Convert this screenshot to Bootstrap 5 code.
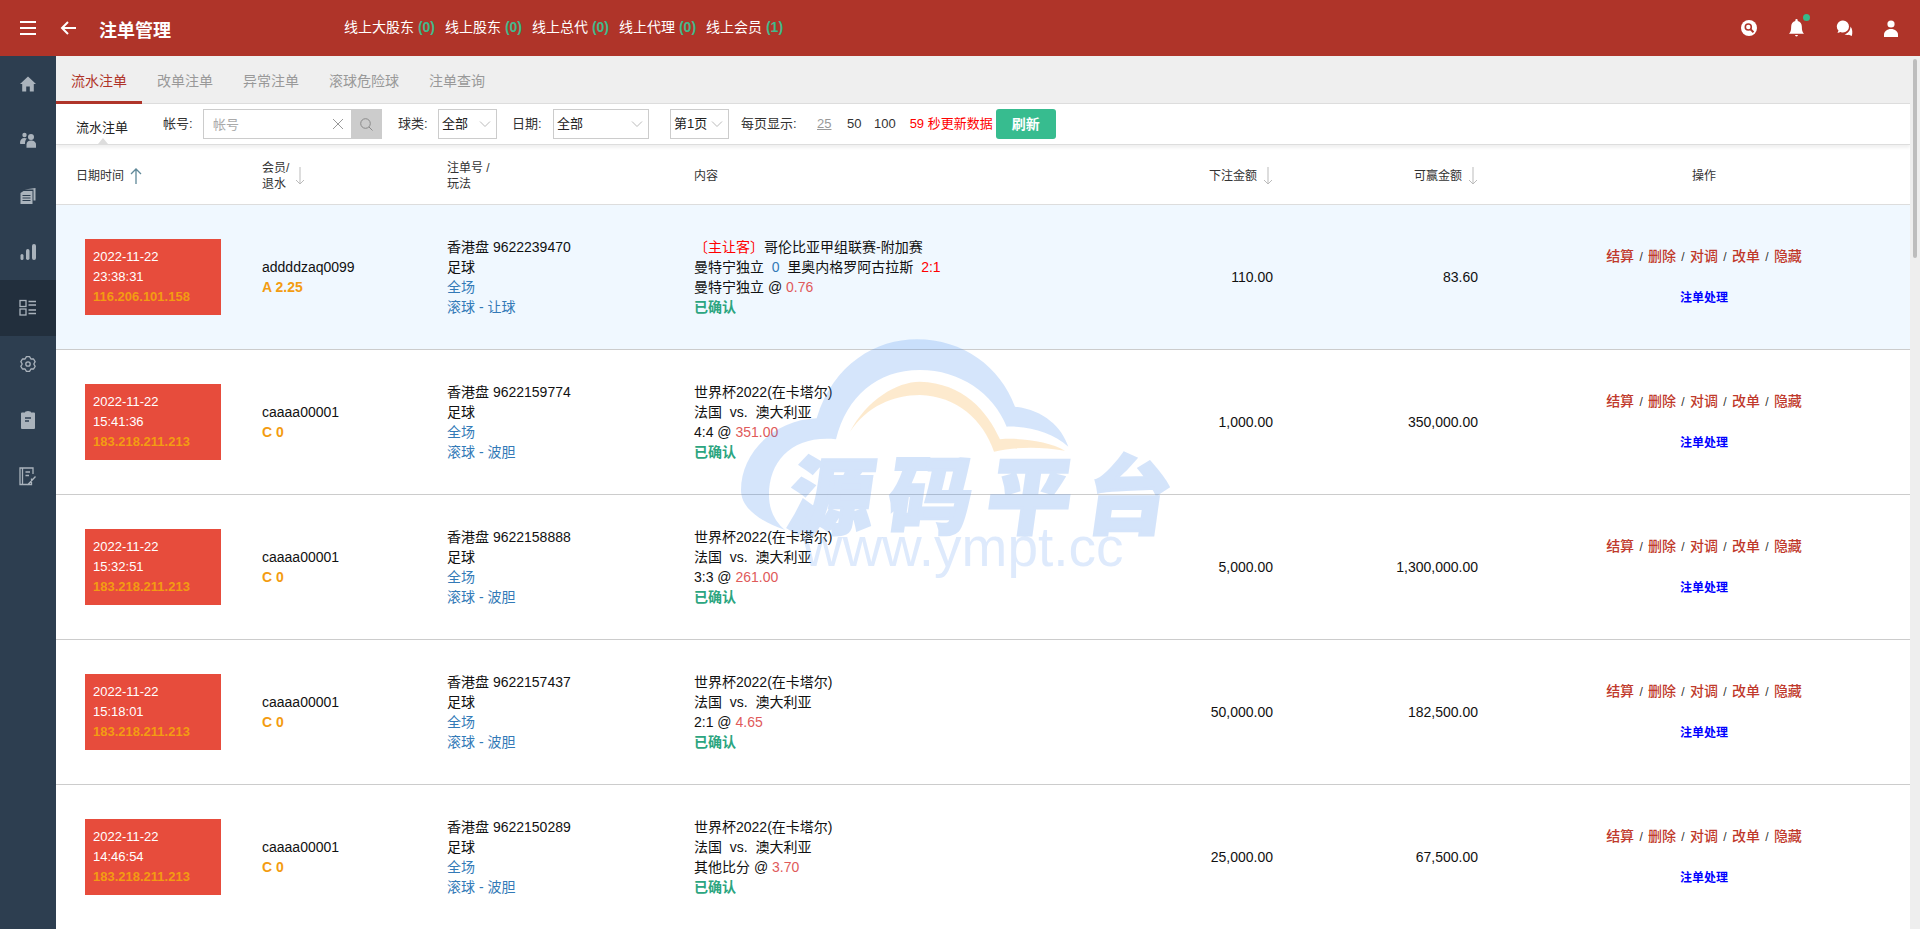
<!DOCTYPE html>
<html lang="zh">
<head>
<meta charset="utf-8">
<title>注单管理</title>
<link href="https://cdn.jsdelivr.net/npm/bootstrap@5.3.0/dist/css/bootstrap.min.css" rel="stylesheet">
<style>
html,body{height:100%;overflow:hidden}
body{font-family:"Liberation Sans","Noto Sans CJK SC",sans-serif;font-size:13px;color:#222;background:#fff}
.topbar{height:56px;background:#af3429;color:#fff;padding-left:20px;padding-right:21px}
.topbar svg{display:block}
.pagetitle{font-size:18px;font-weight:700;margin-left:23px;margin-top:6px;width:245px}
.onlinelinks{font-size:14px;gap:10px;margin-top:-1px}
.onlinelinks b{color:#43b98b;font-weight:700}
.topicons{gap:30px}
.belldot{position:absolute;width:7px;height:7px;border-radius:50%;background:#36b98a;top:-5px;right:-4px}
.shell{height:873px}
.sidemenu{width:56px;background:#2d3e50;flex:none}
.sideitem{height:56px;color:#aab3bc}
.sideitem.on{background:#222f3d}
.mainpane{overflow:hidden;position:relative;min-width:0}
.scrolltrack{width:10px;background:#eee;flex:none}
.scrollthumb{width:4px;height:199px;margin:3px 0 0 3px;border-radius:2px;background:#bdbdbd}
.tabstrip{height:48px;background:#efefef;border-bottom:1px solid #ddd}
.tabitem{font-size:14px;padding:5px 15px 0;color:#999;text-decoration:none;height:48px;display:flex;align-items:center;border-bottom:2px solid transparent;margin-bottom:-1px}
.tabitem.on{color:#af3429;border-bottom:3px solid #af3429}
.filterbar{height:41px;border-bottom:1px solid #ddd;box-shadow:0 3px 3px rgba(0,0,0,.06);padding-top:5px;position:relative;background:#fff;z-index:1}
.filtertitle{position:absolute;left:20px;top:0;height:40px;padding-top:14px;width:54px;white-space:nowrap}
.filtertitle::after{content:"";position:absolute;left:22px;bottom:0;border:5px solid transparent;border-top:0;border-bottom:6px solid #ddd}
.ftlabel{white-space:nowrap;color:#333;width:30px}
.ftwide{width:56px}
.searchbox{border:1px solid #ccc;height:30px;width:179px;margin-left:10px}
.searchbox input{border:0;outline:0;flex:1;min-width:0;height:28px;padding:0 0 0 9px;font-size:13px;background:transparent;font-family:inherit}
.searchbox input::placeholder{color:#aaa}
.searchgo{width:31px;height:30px;margin:-1px -1px -1px 0;background:#ccc}
.pickbox{height:30px;padding:0 0 0 3px;border:1px solid #ccc;border-radius:0;font-size:13px;color:#222;font-family:inherit;background-position:right 5px center;background-size:12px 12px;background-image:url("data:image/svg+xml,%3csvg xmlns='http://www.w3.org/2000/svg' viewBox='0 0 12 12'%3e%3cpath fill='none' stroke='%23bbb' d='M1 3.5l5 5 5-5'/%3e%3c/svg%3e")}
.pagesize{color:#333;text-decoration:none}
.pagesize.cur{color:#999;text-decoration:underline}
.countdown{color:#f00;white-space:nowrap}
.refreshbtn{background:#37bc8f;color:#fff;border:0;height:30px;width:60px;padding:0;font-size:14px;font-weight:700;border-radius:3px}
.bettable{table-layout:fixed;width:1854px;margin:4px 0 0;font-size:14px;color:#111}
.bettable th{font-size:12px;font-weight:400;color:#333;height:55px;padding:0 20px;vertical-align:middle;border-bottom:1px solid #ddd;line-height:16px}
.bettable td{height:145px;padding:0 20px;vertical-align:middle;border-bottom:1px solid #ccc;line-height:20px;--bs-table-bg:transparent}
.bettable tr.hot td{--bs-table-bg:#f0f8ff;background:#f0f8ff}
.sortcell{gap:6px}
.stampbox{width:136px;height:76px;margin-left:9px;background:#e74c3c;color:#fff;font-size:13px;padding:8px;white-space:nowrap}
.stampbox b{color:#f39c12;display:block}
.oddtxt{color:#f39c12;font-weight:700}
.blutxt{color:#337ab7}
.redtxt{color:#f00}
.oddsval{color:#e05a5a}
.okflag{color:#2ca580;font-weight:700}
.actlinks{color:#333;white-space:nowrap}
.actlinks a{color:#c0392b;text-decoration:none;font-weight:500}
.actlinks i{font-style:normal;margin:0 5.3px;font-size:12px}
.proclink{color:#00f;font-size:12px;font-weight:700;text-decoration:none;display:block;margin-top:21px}
.stampart{position:absolute;left:700px;top:320px;width:520px;height:300px;pointer-events:none;z-index:5}
.artzh{font-family:"Noto Sans CJK SC",sans-serif;font-weight:900;font-size:252px;letter-spacing:45px}
.arten{font-family:"Liberation Sans",sans-serif;font-size:165px}
</style>
</head>
<body>
<header class="topbar d-flex align-items-center">
  <svg width="16" height="14" viewBox="0 0 16 14" fill="#fff"><rect width="16" height="2"/><rect y="6" width="16" height="2"/><rect y="12" width="16" height="2"/></svg>
  <svg class="ms-4" width="16" height="14" viewBox="0 0 16 14" fill="none" stroke="#fff" stroke-width="2"><path d="M16 7H2M8 1L2 7l6 6"/></svg>
  <div class="pagetitle">注单管理</div>
  <div class="onlinelinks d-flex">
    <span>线上大股东 <b>(0)</b></span><span>线上股东 <b>(0)</b></span><span>线上总代 <b>(0)</b></span><span>线上代理 <b>(0)</b></span><span>线上会员 <b>(1)</b></span>
  </div>
  <div class="topicons d-flex align-items-center ms-auto">
    <svg width="16" height="16" viewBox="0 0 16 16"><circle cx="8" cy="8" r="8" fill="#fff"/><circle cx="7.3" cy="7" r="3" fill="none" stroke="#af3429" stroke-width="1.6"/><path d="M9.5 9.3l3 3" stroke="#af3429" stroke-width="2"/></svg>
    <span class="position-relative"><svg width="19" height="19" viewBox="0 0 16 16" fill="#fff"><path d="M8 0a1 1 0 0 0-1 1v.6C4.700 2.100 3.500 4 3.500 6.500c0 3-.5 4.700-1.800 6h12.600c-1.300-1.300-1.800-3-1.800-6 0-2.500-1.200-4.400-3.500-4.900V1a1 1 0 0 0-1-1zM6.800 13.500a1.200 1.200 0 0 0 2.400 0z"/></svg><span class="belldot"></span></span>
    <svg width="17" height="17" viewBox="0 0 17 17" fill="#fff"><path d="M7 .5a6 6 0 0 1 0 12c-1 0-1.500-.2-2.400-.6L1.500 13l1-2.400A6 6 0 0 1 7 .5z"/><path d="M14.500 6.500c2 2.500 2.300 6 1.300 9.500l-3-1.300c-1 .3-3 .3-4.300-.5 3.500-.5 6-4 6-7.700z"/></svg>
    <svg width="16" height="17" viewBox="0 0 16 17" fill="#fff"><circle cx="8" cy="4" r="3.600"/><path d="M1 17v-2.500C1 11.500 4 9 8 9s7 2.500 7 5.500V17z"/></svg>
  </div>
</header>
<div class="shell d-flex">
  <nav class="sidemenu">
    <div class="sideitem d-flex align-items-center justify-content-center"><svg width="16" height="16" viewBox="0 0 16 16" fill="currentColor"><path d="M8 .5L0 8h2.200v7.500h4v-5h3.600v5h4V8H16L8 .5z"/></svg></div>
    <div class="sideitem d-flex align-items-center justify-content-center"><svg width="16" height="16" viewBox="0 0 16 16" fill="currentColor"><circle cx="4.500" cy="3" r="2.200"/><path d="M0 11c0-3 1.500-5 4.500-5 1 0 1.700.2 2.300.6C5.500 8 5 9.500 5 11.500v.5H1c-.6 0-1-.4-1-1z"/><circle cx="11" cy="5" r="3"/><path d="M6.500 15.800v-3.300c0-2.500 2-4 4.500-4s5 1.500 5 4v3.300z"/></svg></div>
    <div class="sideitem d-flex align-items-center justify-content-center"><svg width="16" height="16" viewBox="0 0 16 16"><path fill="currentColor" d="M.5 5l3-2h9v13H.5zM4.500 1.500L15.500 0v12.500h-2V1.500z"/><path stroke="#2d3e50" stroke-width="1" d="M2.500 7.500h8M2.500 10h8M2.500 12.500h8"/></svg></div>
    <div class="sideitem d-flex align-items-center justify-content-center"><svg width="16" height="16" viewBox="0 0 16 16" fill="currentColor"><rect x=".5" y="10" width="3" height="6" rx="1.500"/><rect x="6" y="5" width="3.500" height="11" rx="1.700"/><rect x="12" y="0" width="4" height="16" rx="2"/></svg></div>
    <div class="sideitem on d-flex align-items-center justify-content-center"><svg width="18" height="18" viewBox="0 0 18 18" fill="none" stroke="currentColor" stroke-width="1.300"><rect x="1" y="1.500" width="6" height="6"/><rect x="1" y="10" width="6" height="6"/><path d="M9.500 2.500H17M9.500 6H17M9.500 11H17M9.500 14.500H17"/></svg></div>
    <div class="sideitem d-flex align-items-center justify-content-center"><svg width="16" height="16" viewBox="0 0 16 16" fill="none" stroke="currentColor" stroke-width="1.300" stroke-linejoin="round"><path d="M6.440.66H9.560L10.900 2.980 13.570 2.980 15.130 5.680 13.800 8 15.130 10.320 13.570 13.020 10.900 13.020 9.560 15.340H6.440L5.100 13.020 2.430 13.020.87 10.320 2.200 8 .87 5.680 2.430 2.980 5.100 2.980z"/><circle cx="8" cy="8" r="2.200"/></svg></div>
    <div class="sideitem d-flex align-items-center justify-content-center"><svg width="14" height="18" viewBox="0 0 14 18"><path fill="currentColor" d="M4 1.500a3 1.500 0 0 1 6 0h3a1 1 0 0 1 1 1V17a1 1 0 0 1-1 1H1a1 1 0 0 1-1-1V2.500a1 1 0 0 1 1-1z"/><path stroke="#2d3e50" stroke-width="1.300" d="M4 7h6M4 10h4"/></svg></div>
    <div class="sideitem d-flex align-items-center justify-content-center"><svg width="18" height="19" viewBox="0 0 18 19" fill="none" stroke="currentColor" stroke-width="1.300"><path d="M12.500 11.500v6H1V1h13v6M3.500 1v16.500M6.500 5H11M6.500 8.500H10M8.500 18l8-8.500"/></svg></div>
  </nav>
  <main class="mainpane flex-grow-1">
    <div class="tabstrip d-flex">
      <a class="tabitem on" href="#">流水注单</a><a class="tabitem" href="#">改单注单</a><a class="tabitem" href="#">异常注单</a><a class="tabitem" href="#">滚球危险球</a><a class="tabitem" href="#">注单查询</a>
    </div>
    <div class="filterbar d-flex align-items-start">
      <div class="filtertitle">流水注单</div>
      <div class="d-flex align-items-center" style="margin-left:107px">
        <span class="ftlabel">帐号:</span>
        <div class="searchbox d-flex align-items-center">
          <input type="text" placeholder="帐号">
          <svg class="me-2" width="10" height="10" viewBox="0 0 10 10" stroke="#999"><path d="M0 0l10 10M10 0L0 10"/></svg>
          <div class="searchgo d-flex align-items-center justify-content-center"><svg width="13" height="13" viewBox="0 0 13 13" fill="none" stroke="#8a8a8a"><circle cx="5.500" cy="5.500" r="4.800"/><path d="M9 9l3.500 3.500"/></svg></div>
        </div>
        <span class="ftlabel" style="margin-left:16px">球类:</span>
        <select class="form-select pickbox" style="width:59px;margin-left:10px"><option>全部</option></select>
        <span class="ftlabel" style="margin-left:15px">日期:</span>
        <select class="form-select pickbox" style="width:96px;margin-left:11px"><option>全部</option></select>
        <select class="form-select pickbox" style="width:59px;margin-left:21px"><option>第1页</option></select>
        <span class="ftlabel ftwide" style="margin-left:12px">每页显示:</span>
        <a class="pagesize cur" href="#" style="margin-left:20px">25</a>
        <a class="pagesize" href="#" style="margin-left:15.500px">50</a>
        <a class="pagesize" href="#" style="margin-left:12.500px">100</a>
        <span class="countdown" style="margin-left:14px">59 秒更新数据</span>
        <button class="refreshbtn" type="button" style="margin-left:3px">刷新</button>
      </div>
    </div>
    <table class="table bettable">
      <colgroup><col style="width:186px"><col style="width:185px"><col style="width:247px"><col style="width:419px"><col style="width:200px"><col style="width:205px"><col style="width:412px"></colgroup>
      <thead>
        <tr>
          <th><span class="d-inline-flex align-items-center sortcell">日期时间 <svg width="12" height="16" viewBox="0 0 12 16" fill="none" stroke="#5f8898" stroke-width="1.300"><path d="M6 16V1M1 6l5-5 5 5"/></svg></span></th>
          <th><span class="d-inline-flex align-items-center sortcell"><span>会员/<br>退水</span><svg width="10" height="18" viewBox="0 0 10 18" fill="none" stroke="#bbb"><path d="M5 0v17M1 13l4 4 4-4"/></svg></span></th>
          <th>注单号 /<br>玩法</th>
          <th>内容</th>
          <th class="text-end"><span class="d-inline-flex align-items-center sortcell">下注金额 <svg width="10" height="18" viewBox="0 0 10 18" fill="none" stroke="#bbb"><path d="M5 0v17M1 13l4 4 4-4"/></svg></span></th>
          <th class="text-end"><span class="d-inline-flex align-items-center sortcell">可赢金额 <svg width="10" height="18" viewBox="0 0 10 18" fill="none" stroke="#bbb"><path d="M5 0v17M1 13l4 4 4-4"/></svg></span></th>
          <th class="text-center">操作</th>
        </tr>
      </thead>
      <tbody>
        <tr class="hot">
          <td><div class="stampbox">2022-11-22<br>23:38:31<b>116.206.101.158</b></div></td>
          <td>addddzaq0099<br><span class="oddtxt">A 2.25</span></td>
          <td>香港盘 9622239470<br>足球<br><span class="blutxt">全场</span><br><span class="blutxt">滚球 - 让球</span></td>
          <td><span class="redtxt">〔主让客〕</span>哥伦比亚甲组联赛-附加赛<br>曼特宁独立&nbsp; <span class="blutxt">0</span>&nbsp; 里奥内格罗阿古拉斯&nbsp; <span class="redtxt">2:1</span><br>曼特宁独立 @ <span class="oddsval">0.76</span><br><span class="okflag">已确认</span></td>
          <td class="text-end">110.00</td>
          <td class="text-end">83.60</td>
          <td class="text-center"><div class="actlinks"><a href="#">结算</a><i>/</i><a href="#">删除</a><i>/</i><a href="#">对调</a><i>/</i><a href="#">改单</a><i>/</i><a href="#">隐藏</a></div><a class="proclink" href="#">注单处理</a></td>
        </tr>
        <tr>
          <td><div class="stampbox">2022-11-22<br>15:41:36<b>183.218.211.213</b></div></td>
          <td>caaaa00001<br><span class="oddtxt">C 0</span></td>
          <td>香港盘 9622159774<br>足球<br><span class="blutxt">全场</span><br><span class="blutxt">滚球 - 波胆</span></td>
          <td>世界杯2022(在卡塔尔)<br>法国&nbsp; vs.&nbsp; 澳大利亚<br>4:4 @ <span class="oddsval">351.00</span><br><span class="okflag">已确认</span></td>
          <td class="text-end">1,000.00</td>
          <td class="text-end">350,000.00</td>
          <td class="text-center"><div class="actlinks"><a href="#">结算</a><i>/</i><a href="#">删除</a><i>/</i><a href="#">对调</a><i>/</i><a href="#">改单</a><i>/</i><a href="#">隐藏</a></div><a class="proclink" href="#">注单处理</a></td>
        </tr>
        <tr>
          <td><div class="stampbox">2022-11-22<br>15:32:51<b>183.218.211.213</b></div></td>
          <td>caaaa00001<br><span class="oddtxt">C 0</span></td>
          <td>香港盘 9622158888<br>足球<br><span class="blutxt">全场</span><br><span class="blutxt">滚球 - 波胆</span></td>
          <td>世界杯2022(在卡塔尔)<br>法国&nbsp; vs.&nbsp; 澳大利亚<br>3:3 @ <span class="oddsval">261.00</span><br><span class="okflag">已确认</span></td>
          <td class="text-end">5,000.00</td>
          <td class="text-end">1,300,000.00</td>
          <td class="text-center"><div class="actlinks"><a href="#">结算</a><i>/</i><a href="#">删除</a><i>/</i><a href="#">对调</a><i>/</i><a href="#">改单</a><i>/</i><a href="#">隐藏</a></div><a class="proclink" href="#">注单处理</a></td>
        </tr>
        <tr>
          <td><div class="stampbox">2022-11-22<br>15:18:01<b>183.218.211.213</b></div></td>
          <td>caaaa00001<br><span class="oddtxt">C 0</span></td>
          <td>香港盘 9622157437<br>足球<br><span class="blutxt">全场</span><br><span class="blutxt">滚球 - 波胆</span></td>
          <td>世界杯2022(在卡塔尔)<br>法国&nbsp; vs.&nbsp; 澳大利亚<br>2:1 @ <span class="oddsval">4.65</span><br><span class="okflag">已确认</span></td>
          <td class="text-end">50,000.00</td>
          <td class="text-end">182,500.00</td>
          <td class="text-center"><div class="actlinks"><a href="#">结算</a><i>/</i><a href="#">删除</a><i>/</i><a href="#">对调</a><i>/</i><a href="#">改单</a><i>/</i><a href="#">隐藏</a></div><a class="proclink" href="#">注单处理</a></td>
        </tr>
        <tr>
          <td><div class="stampbox">2022-11-22<br>14:46:54<b>183.218.211.213</b></div></td>
          <td>caaaa00001<br><span class="oddtxt">C 0</span></td>
          <td>香港盘 9622150289<br>足球<br><span class="blutxt">全场</span><br><span class="blutxt">滚球 - 波胆</span></td>
          <td>世界杯2022(在卡塔尔)<br>法国&nbsp; vs.&nbsp; 澳大利亚<br>其他比分 @ <span class="oddsval">3.70</span><br><span class="okflag">已确认</span></td>
          <td class="text-end">25,000.00</td>
          <td class="text-end">67,500.00</td>
          <td class="text-center"><div class="actlinks"><a href="#">结算</a><i>/</i><a href="#">删除</a><i>/</i><a href="#">对调</a><i>/</i><a href="#">改单</a><i>/</i><a href="#">隐藏</a></div><a class="proclink" href="#">注单处理</a></td>
        </tr>
      </tbody>
    </table>
  </main>
  <div class="scrolltrack"><div class="scrollthumb"></div></div>
</div>
<svg class="stampart" viewBox="0 0 1560 900">
  <path fill="#3b82ec" fill-opacity=".21" d="M255 630C170 600 123 560 123 510C123 400 220 300 350 295C400 130 530 58 650 58C790 58 900 140 945 260C1030 270 1085 320 1105 380C1060 340 990 318 920 320C880 220 780 150 660 150C530 150 440 230 408 358C280 345 207 420 207 525C207 570 225 605 255 630Z"/>
  <path fill="#f9b24f" fill-opacity=".28" d="M450 335C500 240 590 185 660 185C790 190 860 270 900 358C960 352 1050 365 1095 392C1020 380 950 380 882 395C850 300 770 228 660 225C580 225 500 260 450 335Z"/>
  <text class="artzh" x="345" y="622" transform="skewX(-8)" fill="#3b82ec" stroke="#3b82ec" stroke-width="9" opacity=".21">源码平台</text>
  <text class="arten" x="308" y="738" fill="#3b82ec" fill-opacity=".17">www.ympt.cc</text>
</svg>
<script src="https://cdn.jsdelivr.net/npm/bootstrap@5.3.0/dist/js/bootstrap.bundle.min.js"></script>
</body>
</html>
